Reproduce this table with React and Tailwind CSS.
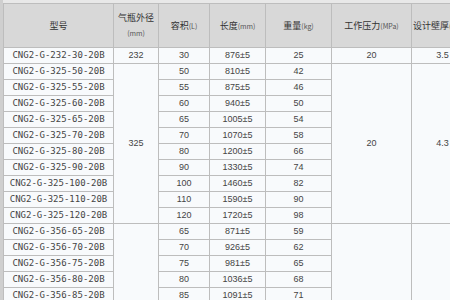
const ROWS = [
  ['CNG2-G-232-30-20B', '30', '876±5', '25'],
  ['CNG2-G-325-50-20B', '50', '810±5', '42'],
  ['CNG2-G-325-55-20B', '55', '875±5', '46'],
  ['CNG2-G-325-60-20B', '60', '940±5', '50'],
  ['CNG2-G-325-65-20B', '65', '1005±5', '54'],
  ['CNG2-G-325-70-20B', '70', '1070±5', '58'],
  ['CNG2-G-325-80-20B', '80', '1200±5', '66'],
  ['CNG2-G-325-90-20B', '90', '1330±5', '74'],
  ['CNG2-G-325-100-20B', '100', '1460±5', '82'],
  ['CNG2-G-325-110-20B', '110', '1590±5', '90'],
  ['CNG2-G-325-120-20B', '120', '1720±5', '98'],
  ['CNG2-G-356-65-20B', '65', '871±5', '59'],
  ['CNG2-G-356-70-20B', '70', '926±5', '62'],
  ['CNG2-G-356-75-20B', '75', '981±5', '65'],
  ['CNG2-G-356-80-20B', '80', '1036±5', '68'],
  ['CNG2-G-356-85-20B', '85', '1091±5', '71'],
]

const cell = 'border border-[#bdbdbd] text-center align-middle p-0'
const body = cell + ' text-[9px] text-[#444]'
const mono = { fontFamily: '"DejaVu Sans Mono", "Liberation Mono", monospace' }

function Unit({ children }) {
  return <span className="text-[7px] text-[#555]">{children}</span>
}

export default function App() {
  return (
    <div className="w-[450px] h-[300px] overflow-hidden bg-[#e8e8e8] pt-[3px] border-l-[3px] border-[#cfcfcf]"
      style={{ fontFamily: '"Liberation Sans", "Noto Sans CJK SC", sans-serif' }}>
      <table className="border-collapse table-fixed w-[470px] bg-[#f8fafc]">
        <colgroup>
          <col className="w-[110px]" />
          <col className="w-[45px]" />
          <col className="w-[51px]" />
          <col className="w-[56px]" />
          <col className="w-[66px]" />
          <col className="w-[80px]" />
          <col className="w-[62px]" />
        </colgroup>
        <thead>
          <tr className="h-[44px] bg-[#d8d8d8] text-[9px] text-[#333]" style={{ fontFamily: '"Noto Sans CJK SC", sans-serif' }}>
            <th className={cell + ' font-normal'}>型号</th>
            <th className={cell + ' font-normal leading-[15px]'}>
              <div>气瓶外径</div>
              <div><Unit>(mm)</Unit></div>
            </th>
            <th className={cell + ' font-normal'}>容积<Unit>(L)</Unit></th>
            <th className={cell + ' font-normal'}>长度<Unit>(mm)</Unit></th>
            <th className={cell + ' font-normal'}>重量<Unit>(kg)</Unit></th>
            <th className={cell + ' font-normal'}>工作压力<Unit>(MPa)</Unit></th>
            <th className={cell + ' font-normal'}>设计壁厚(mm)</th>
          </tr>
        </thead>
        <tbody>
          {ROWS.map((r, i) => (
            <tr key={r[0]} className="h-[16px]">
              <td className={body + ' text-[7.5px]'} style={mono}>{r[0]}</td>
              {i === 0 && <td className={body}>232</td>}
              {i === 1 && <td className={body} rowSpan={10}>325</td>}
              {i === 11 && <td className={body} rowSpan={5}></td>}
              <td className={body}>{r[1]}</td>
              <td className={body}>{r[2]}</td>
              <td className={body}>{r[3]}</td>
              {i === 0 && <td className={body}>20</td>}
              {i === 1 && <td className={body} rowSpan={10}>20</td>}
              {i === 11 && <td className={body} rowSpan={5}></td>}
              {i === 0 && <td className={body}>3.5</td>}
              {i === 1 && <td className={body} rowSpan={10}>4.3</td>}
              {i === 11 && <td className={body} rowSpan={5}></td>}
            </tr>
          ))}
        </tbody>
      </table>
    </div>
  )
}
